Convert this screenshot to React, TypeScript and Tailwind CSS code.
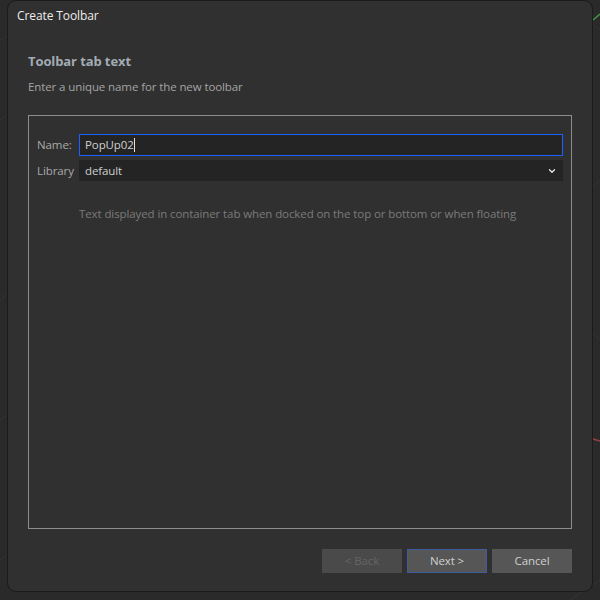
import { ChevronDown } from "lucide-react";

export default function App() {
  return (
    <div
      className="relative w-[600px] h-[600px] overflow-hidden bg-[#2a2a2a] text-[11.5px] tracking-[-0.1px]"
      style={{ fontFamily: '"Open Sans", "Noto Sans", sans-serif' }}
    >
      {/* faint canvas lines behind the dialog */}
      <svg className="absolute inset-0" width="600" height="600">
        <g stroke="#333" strokeWidth="1" fill="none">
          <path d="M0 40 L60 10 M0 120 L40 90 M0 300 L50 260 M0 420 L30 400 M0 560 L40 530" />
          <path d="M560 0 L600 30 M580 200 L600 180 M590 330 L600 340 M570 600 L600 580" />
        </g>
        <path d="M593 20 L600 14" stroke="#3e9a42" strokeWidth="1.5" />
        <path d="M593 439 L600 441" stroke="#9a3e46" strokeWidth="1.5" />
      </svg>

      <div className="relative ml-[7px] w-[586px] h-[592px] rounded-[9px] border border-[#1b1b1b] bg-[#303030] flex flex-col">
        <div className="h-[31px] pl-[9px] pt-[6px] text-[12px] text-[#ececec]">Create Toolbar</div>

        <div className="px-[20px] pt-[20px]">
          <div className="text-[13px] font-bold text-[#a3abb3] leading-[18px]">Toolbar tab text</div>
          <div className="mt-[8px] text-[#a4a4a4] leading-[18px]">Enter a unique name for the new toolbar</div>
        </div>

        <div className="mx-[20px] mt-[19px] h-[414px] border border-[#8c8c8c] px-[8px] pt-[18px]">
          <div className="flex items-center h-[22px]">
            <div className="w-[42px] text-[#a9a9a9]">Name:</div>
            <div className="flex-1 h-[22px] border border-[#1a62ff] bg-[#242424] flex items-center pl-[5px] text-[#cfcfcf]">
              PopUp02
              <span className="w-px h-[14px] bg-[#e0e0e0]" />
            </div>
          </div>
          <div className="flex items-center h-[21px] mt-[4px]">
            <div className="w-[42px] text-[#a9a9a9]">Library</div>
            <div className="flex-1 h-[21px] bg-[#242424] flex items-center justify-between pl-[6px] pr-[6px] text-[#cfcfcf]">
              default
              <ChevronDown size={10} strokeWidth={3} className="text-[#e8e8e8]" />
            </div>
          </div>
          <div className="pl-[42px] mt-[24px] text-[#7b7b7b]">
            Text displayed in container tab when docked on the top or bottom or when floating
          </div>
        </div>

        <div className="flex justify-end gap-[5px] pr-[20px] mt-[20px]">
          <div className="w-[80px] h-[24px] bg-[#4a4a4a] text-[#656565] flex items-center justify-center">&lt; Back</div>
          <div className="w-[80px] h-[24px] bg-[#565656] border border-[#3d5d9e] text-[#d0d0d0] flex items-center justify-center">Next &gt;</div>
          <div className="w-[80px] h-[24px] bg-[#565656] text-[#d0d0d0] flex items-center justify-center">Cancel</div>
        </div>
      </div>
    </div>
  );
}
